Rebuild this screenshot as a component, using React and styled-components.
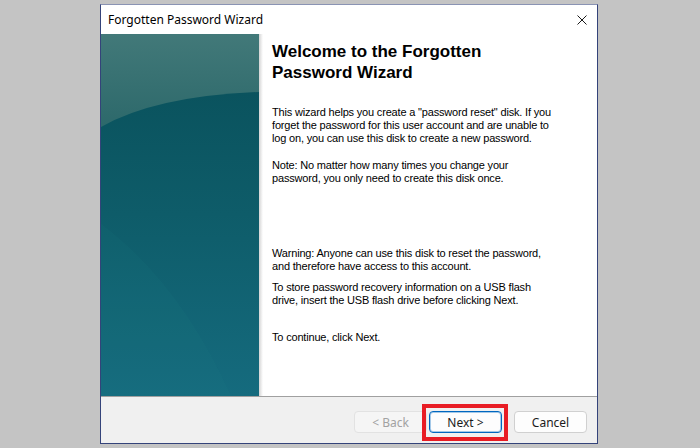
import React from 'react';
import styled, { createGlobalStyle } from 'styled-components';

const Global = createGlobalStyle`
  html, body {
    margin: 0;
    padding: 0;
    background: #c4c4c4;
  }
  * { box-sizing: border-box; }
`;

const Page = styled.div`
  width: 700px;
  height: 448px;
  padding: 4px 0 0 100px;
  background: #c4c4c4;
`;

const Window = styled.div`
  width: 498px;
  height: 440px;
  border: 1px solid #34437a;
  border-top-color: #8a93b3;
  background: #ffffff;
  display: flex;
  flex-direction: column;
`;

const TitleBar = styled.div`
  height: 29px;
  display: flex;
  align-items: center;
  justify-content: space-between;
  padding: 0 10px 0 7px;
  font-family: "Noto Sans", "Liberation Sans", sans-serif;
  font-size: 12px;
  color: #000;
`;

const Close = styled.div`
  width: 10px;
  height: 10px;
  display: flex;
`;

const Body = styled.div`
  height: 362px;
  display: flex;
`;

const SidePanel = styled.div`
  width: 158px;
  height: 100%;
  flex-shrink: 0;
  display: flex;
`;

const Shade = styled.div`
  width: 4px;
  flex-shrink: 0;
  background: linear-gradient(to right, #d4d4d4, #eeeeee 60%, #ffffff);
`;

const Content = styled.div`
  flex: 1;
  padding: 7px 0 0 9px;
  font-family: "Liberation Sans", Arial, sans-serif;
  color: #000;
`;

const Heading = styled.h1`
  margin: 0;
  width: 290px;
  font-size: 17px;
  line-height: 21px;
  font-weight: bold;
`;

const Para = styled.p`
  margin: ${p => p.$gap}px 0 0;
  width: 286px;
  font-size: 11px;
  line-height: 13px;
  letter-spacing: -0.18px;
`;

const Divider = styled.div`
  height: 1px;
  background: #a0a0a0;
`;

const Footer = styled.div`
  flex: 1;
  background: #f0f0f0;
  display: flex;
  justify-content: flex-end;
  align-items: flex-start;
  padding: 14px 10px 0 0;
`;

const Button = styled.button`
  position: relative;
  width: 73px;
  height: 22px;
  margin-left: ${p => p.$gap || 0}px;
  padding: 0;
  font-family: "Noto Sans", "Liberation Sans", sans-serif;
  font-size: 12px;
  border-radius: 4px;
  background: ${p => (p.disabled ? '#f5f5f5' : '#fdfdfd')};
  color: ${p => (p.disabled ? '#a2a2a2' : '#1b1b1b')};
  border: 1px solid ${p => (p.$primary ? '#0067c0' : p.disabled ? '#e2e2e2' : '#d0d0d0')};
  box-shadow: ${p => (p.$primary ? 'inset 0 0 0 1px rgba(0,103,192,0.35)' : 'none')};

  ${p =>
    p.$marked &&
    `
    &::after {
      content: '';
      position: absolute;
      left: -8px;
      top: -8px;
      right: -7px;
      bottom: -9px;
      border: 4px solid #e81c24;
    }
  `}
`;

const Watermark = () => (
  <svg width="158" height="362" viewBox="0 0 158 362" preserveAspectRatio="none">
    <defs>
      <linearGradient id="top" x1="0" y1="0" x2="0" y2="1">
        <stop offset="0" stopColor="#427979" />
        <stop offset="0.25" stopColor="#2d696b" />
        <stop offset="1" stopColor="#2a6669" />
      </linearGradient>
      <linearGradient id="arc" x1="0" y1="0" x2="0" y2="1">
        <stop offset="0" stopColor="#0a535e" />
        <stop offset="0.4" stopColor="#0e5c69" />
        <stop offset="1" stopColor="#156b7e" />
      </linearGradient>
    </defs>
    <rect width="158" height="362" fill="url(#top)" />
    <path d="M0 93 Q 55 62 158 58 L158 362 L0 362 Z" fill="url(#arc)" />
    <path d="M0 190 Q 80 250 130 362 L0 362 Z" fill="#2a8a90" opacity="0.08" />
  </svg>
);

const App = () => (
  <>
    <Global />
    <Page>
      <Window>
        <TitleBar>
          Forgotten Password Wizard
          <Close>
            <svg width="10" height="10" viewBox="0 0 10 10">
              <path d="M0.5 0.5 L9.5 9.5 M9.5 0.5 L0.5 9.5" stroke="#1a1a1a" strokeWidth="1" />
            </svg>
          </Close>
        </TitleBar>
        <Body>
          <SidePanel>
            <Watermark />
          </SidePanel>
          <Shade />
          <Content>
            <Heading>Welcome to the Forgotten Password Wizard</Heading>
            <Para $gap={23}>
              This wizard helps you create a "password reset" disk. If you forget the password
              for this user account and are unable to log on, you can use this disk to create a
              new password.
            </Para>
            <Para $gap={14}>
              Note: No matter how many times you change your password, you only need to create
              this disk once.
            </Para>
            <Para $gap={62}>
              Warning: Anyone can use this disk to reset the password, and therefore have access
              to this account.
            </Para>
            <Para $gap={8}>
              To store password recovery information on a USB flash drive, insert the USB flash
              drive before clicking Next.
            </Para>
            <Para $gap={24}>To continue, click Next.</Para>
          </Content>
        </Body>
        <Divider />
        <Footer>
          <Button disabled>&lt; Back</Button>
          <Button $gap={2} $primary $marked>Next &gt;</Button>
          <Button $gap={12}>Cancel</Button>
        </Footer>
      </Window>
    </Page>
  </>
);

export default App;
